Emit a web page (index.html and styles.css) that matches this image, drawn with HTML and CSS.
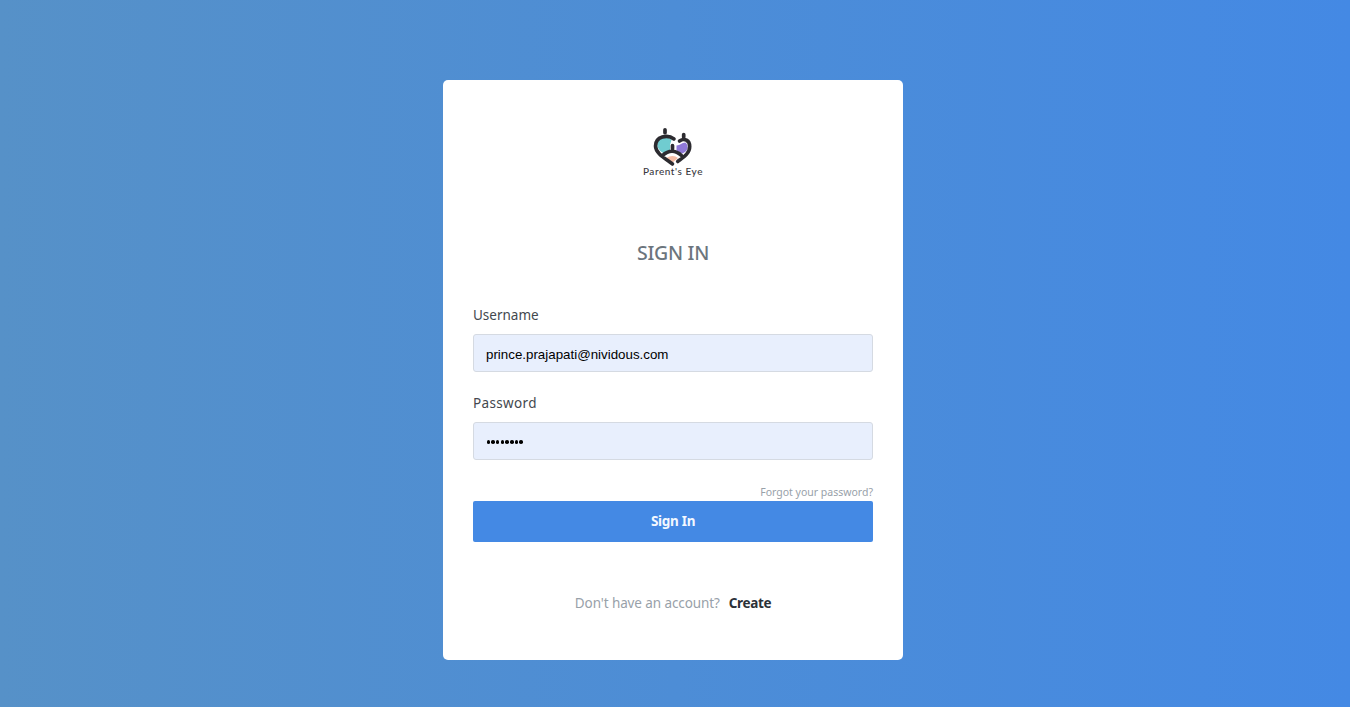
FILE: index.html
```html
<!DOCTYPE html>
<html lang="en">
<head>
<meta charset="utf-8">
<title>Sign In</title>
<link rel="stylesheet" href="styles.css">
</head>
<body>
<main class="card">
  <div class="brand">
    <svg class="mark" viewBox="0 0 40 40" width="40" height="40">
      <path d="M5.500 20c-2-9 8-13 14-7l-1.500 5v7l-5 2c-4-2-6-4-7.500-7z" fill="#70ccd0"/>
      <path d="M24.500 18.500c4 0 5-3 9-3 4 4 2 9-3 11l-3-1-3-2z" fill="#9079d8"/>
      <path d="M14 31q7-4 12 0l-6 5z" fill="#f5bda6"/>
      <path d="M22 12C15.500 7 3.500 9.500 3.500 19c0 7 9 12 17 18M27.500 14c5-3.500 10.200-.500 10.200 5.500 0 7-6 10.500-12 15M10.500 28.500c6-5.500 13-5.500 19 0" fill="none" stroke="#2c2b30" stroke-width="3.600" stroke-linecap="round"/>
      <path d="M13 2.800v2.900M31.700 7.500v2.700M20.500 18.500v3" stroke="#2c2b30" stroke-width="3.700" stroke-linecap="round"/>
    </svg>
    <span class="brand-name">Parent's Eye</span>
  </div>
  <h1 class="title">SIGN IN</h1>
  <form class="form">
    <label class="label label-user" for="user">Username</label>
    <input class="field" id="user" type="text" value="prince.prajapati@nividous.com">
    <label class="label label-pass" for="pass">Password</label>
    <div class="field dots" id="pass"><i></i><i></i><i></i><i></i><i></i><i></i><i></i><i></i></div>
    <a class="forgot">Forgot your password?</a>
    <button class="submit" type="button">Sign In</button>
  </form>
  <p class="signup"><span class="question">Don't have an account?</span><b class="create">Create</b></p>
</main>
</body>
</html>
```
FILE: styles.css
```css
* { box-sizing: border-box; }
body {
  margin: 0;
  height: 707px;
  padding: 80px 0 0 443px;
  background: linear-gradient(90deg, #5691c8, #4489e4);
  font-family: "Noto Sans", sans-serif;
}
.card {
  width: 460px;
  height: 580px;
  padding: 47px 30px 0;
  background: #fff;
  border-radius: 5px;
}
.brand { display: flex; flex-direction: column; align-items: center; height: 112px; }
.mark { display: block; flex: none; margin-left: -2px; }
.brand-name {
  font: 500 10px/12px Lato, sans-serif;
  letter-spacing: .55px;
  color: #3b3a3f;
  margin-top: -2px;
}
.title {
  margin: 0;
  font-size: 19.500px;
  font-weight: 500;
  line-height: 28px;
  letter-spacing: -.3px;
  text-align: center;
  color: #6c757d;
}
.form { display: flex; flex-direction: column; }
.label { font: 13.500px/20px "Noto Sans", sans-serif; color: #43484e; }
.label-user { margin: 38px 0 9px; }
.label-pass { margin: 21px 0 9px; letter-spacing: .35px; }
.field {
  width: 400px;
  height: 38px;
  padding: 3px 12px 0;
  border: 1px solid #d5dae2;
  border-radius: 3px;
  background: #e8effd;
  color: #000;
  font: 13.333px "Liberation Sans", Arial, sans-serif;
}
.dots { display: flex; align-items: center; gap: 1.100px; padding-top: 2px; padding-left: 12.500px; }
.dots i { width: 3.600px; height: 3.600px; border-radius: 50%; background: #000; }
.forgot {
  align-self: flex-end;
  margin-top: 23px;
  font-size: 10.500px;
  line-height: 18px;
  color: #98a1a9;
}
.submit {
  height: 41px;
  padding: 0;
  border: 0;
  border-radius: 2px;
  background: #4489e4;
  color: #f3f8ff;
  font: 700 13.500px/39px "Noto Sans", sans-serif;
  letter-spacing: -.3px;
}
.signup {
  display: flex;
  justify-content: center;
  gap: 9px;
  margin: 51px 0 0;
  font-size: 13.500px;
  line-height: 20px;
  color: #98a1a9;
}
.question { letter-spacing: -.1px; }
.create { color: #2b3138; letter-spacing: -.35px; }
```
